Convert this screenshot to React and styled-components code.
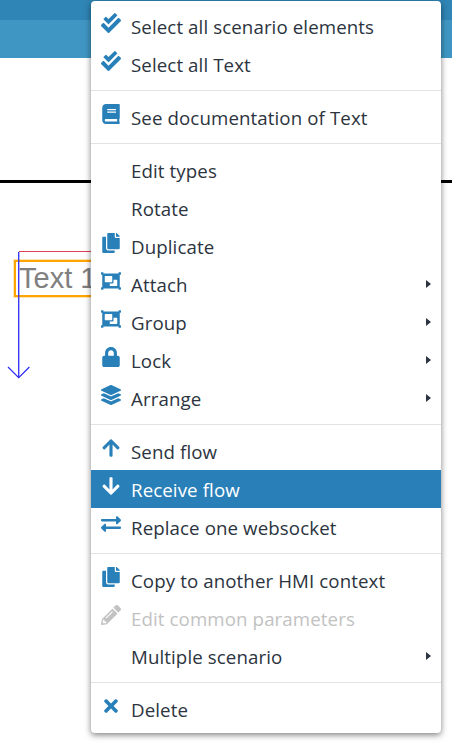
import React from "react"
import styled, { createGlobalStyle } from "styled-components"
import {
  FaArrowDown,
  FaArrowUp,
  FaBook,
  FaCheckDouble,
  FaCopy,
  FaExchangeAlt,
  FaLayerGroup,
  FaLock,
  FaObjectGroup,
  FaPencilAlt,
  FaTimes,
} from "react-icons/fa"

const GlobalStyle = createGlobalStyle`
  html, body {
    margin: 0;
    padding: 0;
    background: #fff;
    overflow: hidden;
  }
  * {
    box-sizing: border-box;
  }
`

const Page = styled.div`
  position: relative;
  display: flex;
  flex-direction: column;
  width: 452px;
  height: 744px;
  overflow: hidden;
  background: #fff;
  font-family: "Open Sans", "Noto Sans", sans-serif;
`

const TopBar = styled.div`
  height: 20px;
  background: #2f85b5;
`

const SubBar = styled.div`
  height: 38px;
  background: #4096c3;
`

const Ruler = styled.div`
  height: 3px;
  margin-top: 122px;
  background: #000;
`

const Canvas = styled.div`
  position: relative;
  flex: 1;
`

const TextBox = styled.div`
  position: absolute;
  left: 14px;
  top: 77px;
  width: 90px;
  height: 37px;
  border: 2px solid #ffa500;
  box-shadow: 0 0 0 1px rgba(255, 165, 0, 0.3);
  color: #808080;
  font-family: "Liberation Sans", sans-serif;
  font-size: 29px;
  line-height: 33px;
  padding-left: 3px;
  white-space: nowrap;
`

const FlowDrawing = styled.svg`
  position: absolute;
  left: 0;
  top: 66px;
`

const Menu = styled.div`
  position: absolute;
  left: 91px;
  top: 1px;
  width: 350px;
  height: 732px;
  padding: 6px 0 5px;
  background: #fff;
  border-radius: 4px;
  box-shadow: 0 2px 6px rgba(0, 0, 0, 0.5);
`

const Item = styled.div`
  display: flex;
  height: 38px;
  padding: 0 10px;
  gap: 9px;
  font-size: 18.7px;
  letter-spacing: 0.1px;
  line-height: 39px;
  white-space: nowrap;
  color: ${(p) => (p.$disabled ? "#c2c2c2" : p.$active ? "#fff" : "#2c3440")};
  background: ${(p) => (p.$active ? "#2980b9" : "transparent")};
`

const IconSlot = styled.span`
  display: flex;
  flex: none;
  width: 21px;
  height: 21px;
  margin-top: 5px;
  align-items: center;
  justify-content: flex-start;
  font-size: 20px;
  color: ${(p) => (p.$disabled ? "#c2c2c2" : p.$active ? "#fff" : "#2980b9")};
`

const Caret = styled.span`
  flex: none;
  align-self: center;
  margin-left: auto;
  border-style: solid;
  border-width: 4.5px 0 4.5px 5px;
  border-color: transparent transparent transparent #2c3440;
`

const Divider = styled.div`
  height: 1px;
  margin: 7px 0;
  background: #e3e3e3;
`

const groups = [
  [
    { label: "Select all scenario elements", icon: FaCheckDouble },
    { label: "Select all Text", icon: FaCheckDouble },
  ],
  [{ label: "See documentation of Text", icon: FaBook }],
  [
    { label: "Edit types" },
    { label: "Rotate" },
    { label: "Duplicate", icon: FaCopy },
    { label: "Attach", icon: FaObjectGroup, sub: true },
    { label: "Group", icon: FaObjectGroup, sub: true },
    { label: "Lock", icon: FaLock, sub: true },
    { label: "Arrange", icon: FaLayerGroup, sub: true },
  ],
  [
    { label: "Send flow", icon: FaArrowUp },
    { label: "Receive flow", icon: FaArrowDown, active: true },
    { label: "Replace one websocket", icon: FaExchangeAlt },
  ],
  [
    { label: "Copy to another HMI context", icon: FaCopy },
    { label: "Edit common parameters", icon: FaPencilAlt, disabled: true },
    { label: "Multiple scenario", sub: true },
  ],
  [{ label: "Delete", icon: FaTimes }],
]

const MenuRow = ({ label, icon: Icon, sub, active, disabled }) => (
  <Item $active={active} $disabled={disabled}>
    <IconSlot $active={active} $disabled={disabled}>
      {Icon && <Icon />}
    </IconSlot>
    <span>{label}</span>
    {sub && <Caret />}
  </Item>
)

const App = () => {
  return (
    <Page>
      <GlobalStyle />
      <TopBar />
      <SubBar />
      <Ruler />
      <Canvas>
        <TextBox>Text 1</TextBox>
        <FlowDrawing width="100" height="140" viewBox="0 0 100 140">
          <path d="M19 2.5H100" stroke="#e0405a" strokeWidth="1" fill="none" />
          <path d="M18.7 3V128.5" stroke="#3a3af5" strokeWidth="1.4" fill="none" />
          <path d="M8 118L18.7 128.7L29.4 118" stroke="#2a2af5" strokeWidth="1.2" fill="none" />
        </FlowDrawing>
      </Canvas>
      <Menu>
        {groups.map((rows, i) => (
          <React.Fragment key={i}>
            {i > 0 && <Divider />}
            {rows.map((row) => (
              <MenuRow key={row.label} {...row} />
            ))}
          </React.Fragment>
        ))}
      </Menu>
    </Page>
  )
}

export default App
